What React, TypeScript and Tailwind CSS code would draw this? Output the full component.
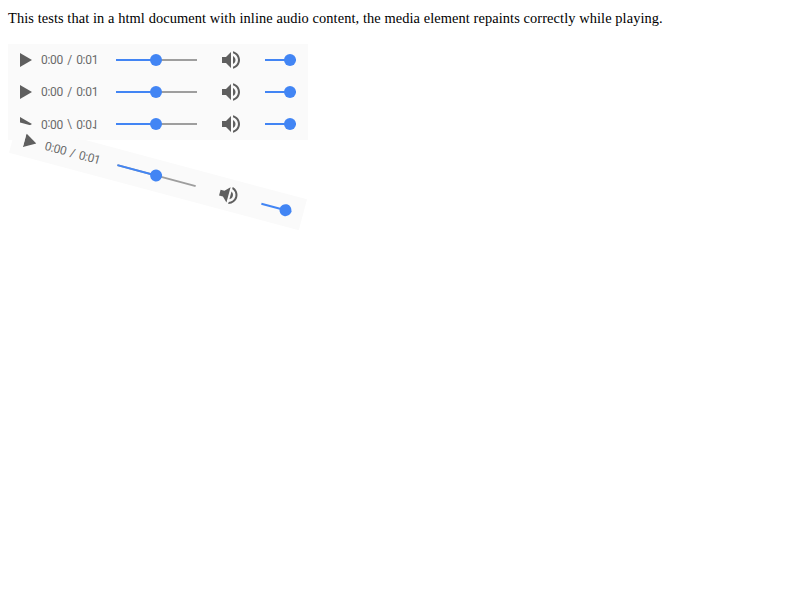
const Play = () => (
  <svg width="12" height="14" viewBox="0 0 12 14" className="shrink-0">
    <path d="M0 0 L12 7 L0 14 Z" fill="#5f5f5f" />
  </svg>
);

const Speaker = () => (
  <svg width="24" height="24" viewBox="0 0 24 24" className="shrink-0">
    <path
      fill="#5f5f5f"
      d="M3 9v6h4l5 5V4L7 9H3zm13.5 3c0-1.77-1.02-3.29-2.5-4.03v8.05c1.48-.73 2.5-2.25 2.5-4.02zM14 3.23v2.06c2.89.86 5 3.54 5 6.71s-2.11 5.85-5 6.71v2.06c4.01-.91 7-4.49 7-8.77s-2.99-7.86-7-8.77z"
    />
  </svg>
);

const Player = ({ className = "", timeClass = "" }: { className?: string; timeClass?: string }) => (
  <div className={`flex h-8 w-[300px] items-center bg-[#fafafa] ${className}`}>
    <div className="ml-3 flex w-[21px] shrink-0"><Play /></div>
    <span className={`w-[75px] shrink-0 text-[12px] leading-none tracking-[-0.3px] [word-spacing:1.6px] text-[#6a6a6a] [font-family:Roboto,sans-serif] ${timeClass}`}>
      0:00 / 0:01
    </span>
    <div className="relative h-0.5 w-[81px] shrink-0 bg-[#9e9e9e]">
      <div className="h-full w-10 bg-[#4285f4]" />
      <div className="absolute left-[34px] top-[-5px] size-3 rounded-full bg-[#4285f4]" />
    </div>
    <div className="ml-[22px] flex w-[46px] shrink-0"><Speaker /></div>
    <div className="relative h-0.5 w-[31px] shrink-0 bg-[#4285f4]">
      <div className="absolute right-0 top-[-5px] size-3 rounded-full bg-[#4285f4]" />
    </div>
  </div>
);

export default function App() {
  return (
    <div className="min-h-screen px-2 pt-[9px] text-black [font-family:'Liberation_Serif',serif]">
      <p className="h-[18px] text-[14.4px] leading-[18px] tracking-[0.09px]">This tests that in a html document with inline audio content, the media element repaints correctly while playing.</p>
      <div className="mt-[17px]">
        <Player />
        <Player />
        <Player timeClass="-scale-y-100" />
        <Player className="relative mt-5 rotate-[15deg]" />
      </div>
    </div>
  );
}
